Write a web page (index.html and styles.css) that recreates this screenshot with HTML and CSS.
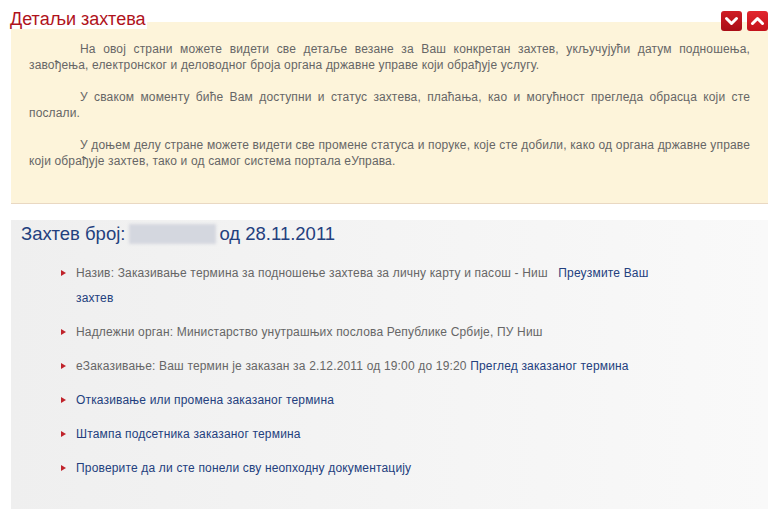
FILE: index.html
```html
<html>
<head>
	<meta charset="UTF-8">
	<link rel="stylesheet" href="styles.css">
</head>
<body>
	<div class="page">
		<div class="details-head">
			<h2 class="details-title">Детаљи захтева</h2>
			<div class="toggles">
				<button class="toggle toggle-down" title="Прикажи">
					<svg width="21" height="20" viewBox="0 0 21 20"><path d="M5.5 7.5 L10.5 12.5 L15.5 7.5" fill="none" stroke="#fff" stroke-width="3" stroke-linecap="round" stroke-linejoin="round"/></svg>
				</button>
				<button class="toggle toggle-up" title="Сакриј">
					<svg width="21" height="20" viewBox="0 0 21 20"><path d="M5.5 12.5 L10.5 7.5 L15.5 12.5" fill="none" stroke="#fff" stroke-width="3" stroke-linecap="round" stroke-linejoin="round"/></svg>
				</button>
			</div>
		</div>
		<div class="details">
			<p>На овој страни можете видети све детаље везане за Ваш конкретан захтев, укључујући датум подношења, завођења, електронског и деловодног броја органа државне управе који обрађује услугу.</p>
			<p>У сваком моменту биће Вам доступни и статус захтева, плаћања, као и могућност прегледа обрасца који сте послали.</p>
			<p>У доњем делу стране можете видети све промене статуса и поруке, које сте добили, како од органа државне управе који обрађује захтев, тако и од самог система портала еУправа.</p>
		</div>

		<div class="request">
			<h3 class="request-title">Захтев број:<span class="request-number"></span>од 28.11.2011</h3>
			<ul class="request-list">
				<li>Назив: Заказивање термина за подношење захтева за личну карту и пасош - Ниш <a href="#" class="download">Преузмите Ваш захтев</a></li>
				<li>Надлежни орган: Министарство унутрашњих послова Републике Србије, ПУ Ниш</li>
				<li>еЗаказивање: Ваш термин је заказан за 2.12.2011 од 19:00 до 19:20 <a href="#">Преглед заказаног термина</a></li>
				<li><a href="#">Отказивање или промена заказаног термина</a></li>
				<li><a href="#">Штампа подсетника заказаног термина</a></li>
				<li><a href="#">Проверите да ли сте понели сву неопходну документацију</a></li>
			</ul>
		</div>
	</div>
</body>
</html>
```

FILE: styles.css
```css
body {
	margin: 0;
	font-family: "Liberation Sans", Arial, sans-serif;
	background: #fff;
}
.page {
	padding: 0 13px 0 11px;
}
.details-head {
	position: relative;
	z-index: 1;
	display: flex;
	justify-content: space-between;
	align-items: flex-start;
	height: 29px;
	margin-bottom: -7px;
}
.details-title {
	margin: 0;
	padding: 10px 1px 0 0;
	margin-left: -1px;
	background: #fff;
	color: #b0121b;
	font-size: 18px;
	font-weight: normal;
	line-height: 19px;
}
.toggles {
	display: flex;
	gap: 5px;
	margin-top: 11px;
}
.toggle {
	display: block;
	width: 21px;
	height: 20px;
	padding: 0;
	border: 0;
	border-radius: 3px;
	cursor: pointer;
}
.toggle svg {
	display: block;
}
.toggle-down {
	background: linear-gradient(#cf1d25, #a80d16);
}
.toggle-up {
	background: linear-gradient(#e2262e, #c3121b);
}
.details {
	background: #fdf4da;
	border-bottom: 1px solid #e9d8c2;
	padding: 19px 18px 18px 18px;
	color: #666;
	font-size: 12px;
	line-height: 16px;
	letter-spacing: 0.15px;
}
.details p {
	margin: 0 0 16px;
	text-align: justify;
	text-indent: 51px;
}
.request {
	margin-top: 16px;
	padding: 2px 10px 28px;
	background: linear-gradient(to right, #efefef, #f9f9f9);
}
.request-title {
	margin: 0;
	color: #23407e;
	font-size: 18.5px;
	font-weight: normal;
	line-height: 24px;
}
.request-number {
	display: inline-block;
	width: 87px;
	height: 20px;
	margin: 0 3px 0 4px;
	vertical-align: -4px;
	background: #d4d7df;
	filter: blur(1.5px);
}
.request-list {
	list-style: none;
	margin: 15px 0 0;
	padding: 0 0 0 55px;
	width: 600px;
	color: #666;
	font-size: 12px;
	line-height: 25px;
	letter-spacing: 0.17px;
}
.request-list li {
	position: relative;
	margin-bottom: 9px;
}
.request-list li:last-child {
	margin-bottom: 0;
}
.request-list li::before {
	content: "";
	position: absolute;
	left: -15px;
	top: 9px;
	border-left: 5px solid #c0232b;
	border-top: 3.5px solid transparent;
	border-bottom: 3.5px solid transparent;
}
.request-list a {
	color: #23407e;
	text-decoration: none;
}
.request-list a.download {
	margin-left: 7px;
}
```
